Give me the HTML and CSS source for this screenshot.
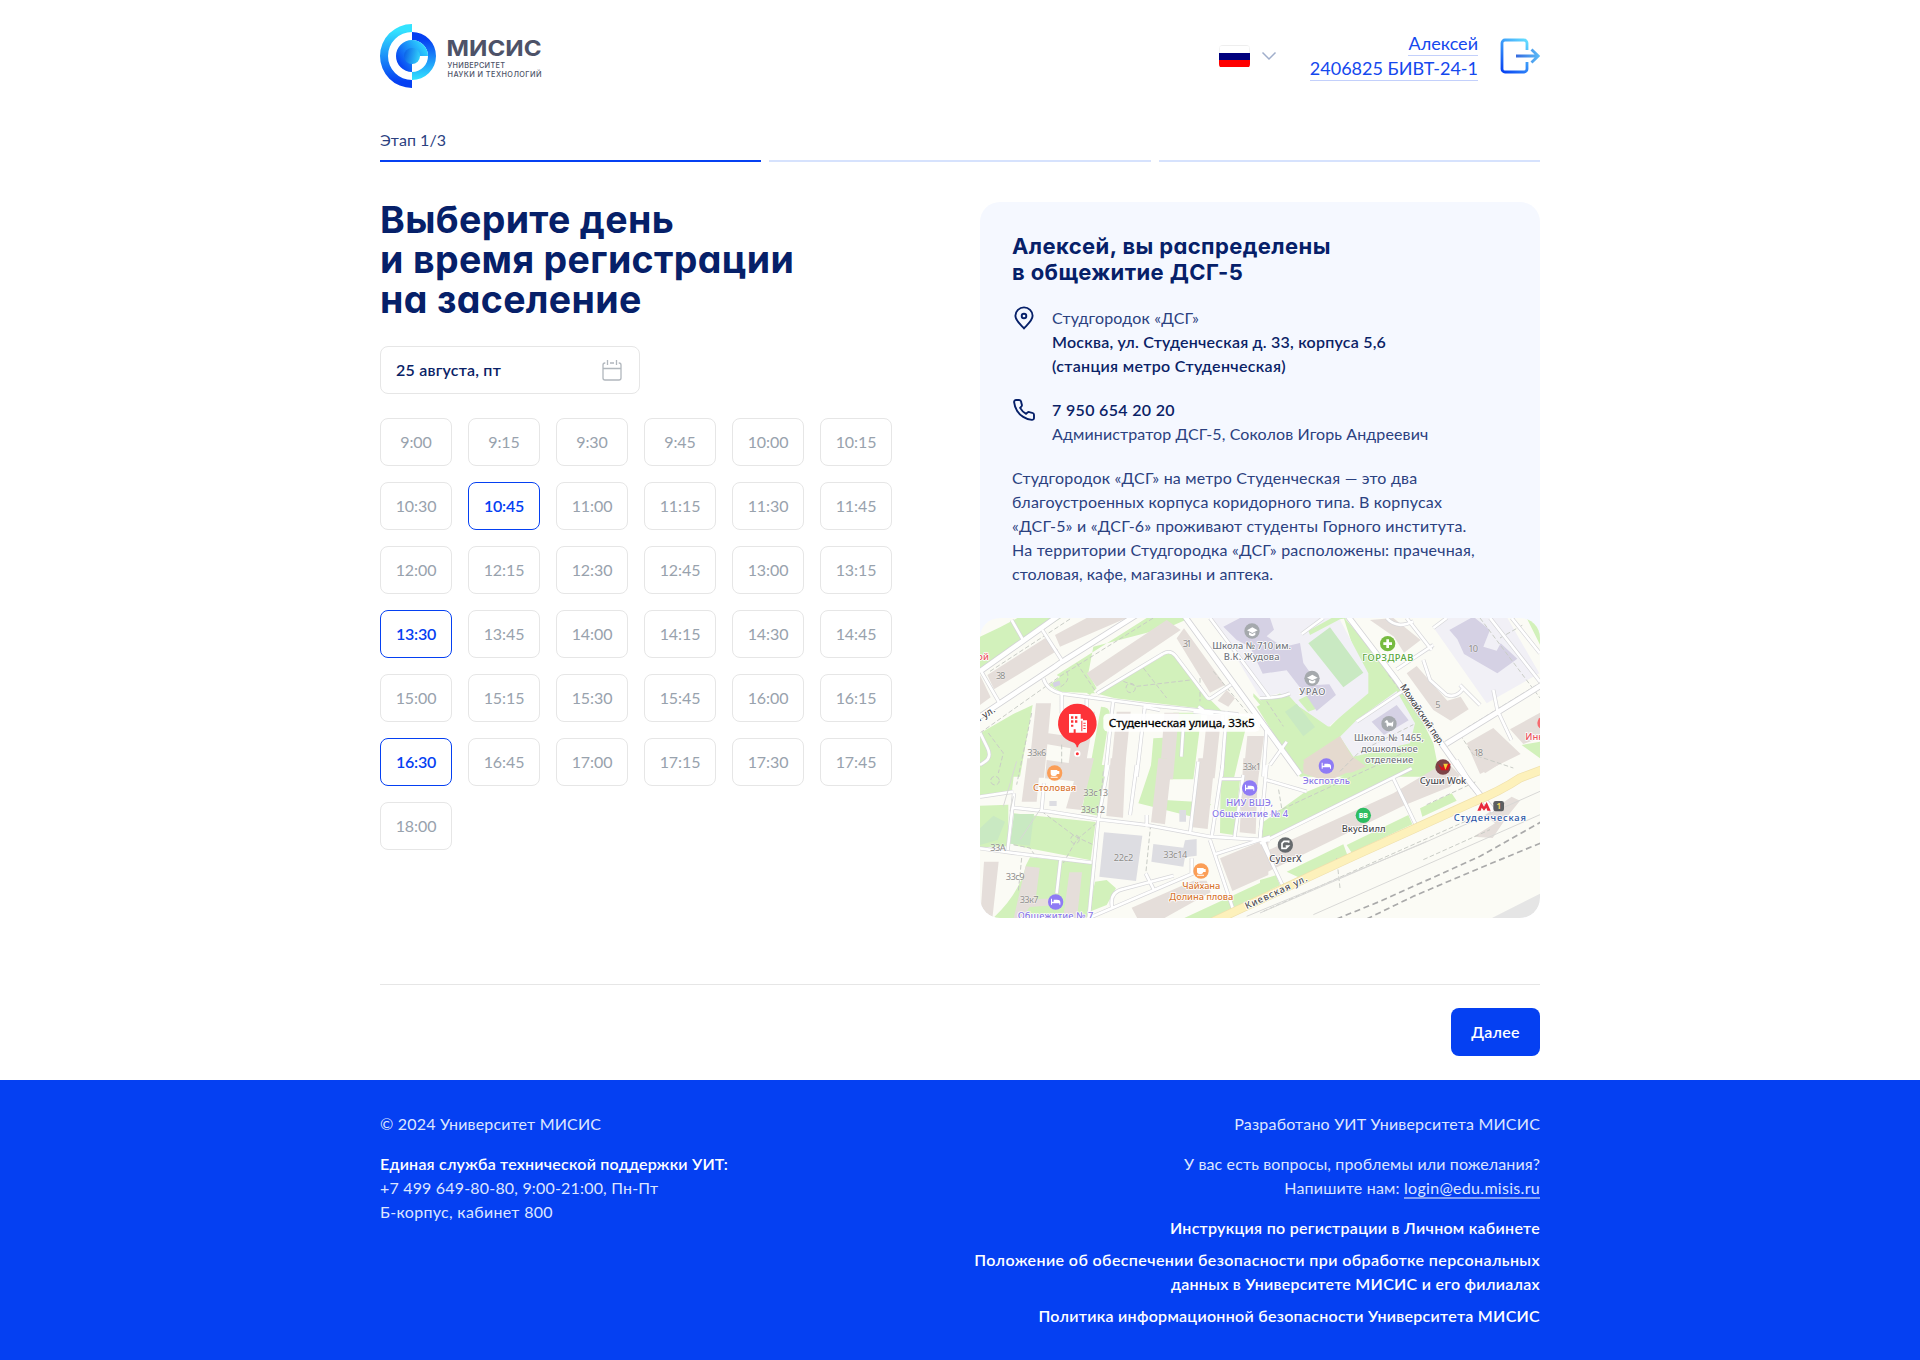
FILE: index.html
```html
<!DOCTYPE html>
<html lang="ru">
<head>
<meta charset="utf-8">
<title>Регистрация на заселение</title>
<link rel="stylesheet" href="styles.css">
</head>
<body>
<div class="container">
  <header class="header">
    <svg class="logo" width="164" height="64" viewBox="0 0 164 64">
      <defs>
        <linearGradient id="lgDown" x1="0" y1="0" x2="0" y2="1"><stop offset="0.1" stop-color="#33e3ff"/><stop offset="0.9" stop-color="#0540f2"/></linearGradient>
        <linearGradient id="lgUp" x1="0" y1="0" x2="0" y2="1"><stop offset="0.15" stop-color="#0540f2"/><stop offset="1" stop-color="#33e3ff"/></linearGradient>
        <linearGradient id="lgIn" x1="1" y1="0.2" x2="0.1" y2="0.8"><stop offset="0" stop-color="#33e3ff"/><stop offset="1" stop-color="#0540f2"/></linearGradient>
        <linearGradient id="lgDot" x1="0" y1="0.4" x2="1" y2="0.6"><stop offset="0" stop-color="#0c62e8"/><stop offset="1" stop-color="#33d3fa"/></linearGradient>
      </defs>
      <path fill="url(#lgDown)" d="M32 0a32 32 0 0 0 0 64v-8a24 24 0 0 1 0-48z"/>
      <path fill="url(#lgUp)" d="M32 8a24 24 0 0 1 0 48v-8a16 16 0 0 0 0-32z"/>
      <path fill="url(#lgIn)" d="M48 32a16 16 0 1 0-16 16v-8l8-8z"/>
      <circle cx="32" cy="32" r="8" fill="url(#lgDot)"/>
      <g class="logo-text">
        <text class="logo-name" x="66.5" y="31.5" textLength="95" lengthAdjust="spacingAndGlyphs">МИСИС</text>
        <text class="logo-sub" x="67.5" y="44.3" textLength="57.5">УНИВЕРСИТЕТ</text>
        <text class="logo-sub" x="67.5" y="52.5" textLength="94">НАУКИ И ТЕХНОЛОГИЙ</text>
      </g>
    </svg>
    <div class="header-right">
      <div class="lang">
        <span class="flag"><i class="flag-white"></i><i class="flag-blue"></i><i class="flag-red"></i></span>
        <svg width="16" height="10" viewBox="0 0 16 10"><path d="M1.5 1.5 8 8l6.5-6.5" fill="none" stroke="#a0aecb" stroke-width="1.5"/></svg>
      </div>
      <div class="user"><span class="user-line">Алексей</span><span class="user-line">2406825 БИВТ-24-1</span></div>
      <svg class="logout" width="40" height="36" viewBox="0 0 40 36">
        <defs><linearGradient id="lgOut" gradientUnits="userSpaceOnUse" x1="2" y1="34" x2="28" y2="4"><stop offset="0" stop-color="#0540f2"/><stop offset="1" stop-color="#63dcff"/></linearGradient>
        <linearGradient id="lgArrow" gradientUnits="userSpaceOnUse" x1="16" y1="18" x2="40" y2="18"><stop offset="0" stop-color="#3569df"/><stop offset="1" stop-color="#5bbdf8"/></linearGradient></defs>
        <path d="M27 12V5a3 3 0 0 0-3-3H5a3 3 0 0 0-3 3v26a3 3 0 0 0 3 3h19a3 3 0 0 0 3-3v-7" fill="none" stroke="url(#lgOut)" stroke-width="2.8"/>
        <path d="M16 18h22M31.500 11.500 38.200 18l-6.700 6.500" fill="none" stroke="url(#lgArrow)" stroke-width="2.8"/>
      </svg>
    </div>
  </header>

  <section class="progress">
    <div class="stage">Этап 1/3</div>
    <div class="bars"><i class="bar bar-on"></i><i class="bar"></i><i class="bar"></i></div>
  </section>

  <main class="main">
    <section class="booking">
      <h1 class="title">Выберите день<br>и время регистрации<br>на заселение</h1>
      <div class="date">
        <span>25 августа, пт</span>
        <svg width="20" height="21" viewBox="0 0 20 21" fill="none" stroke="#b1b7bd" stroke-width="1.3"><path d="M3.300 3H3a2 2 0 0 0-2 2v13a2 2 0 0 0 2 2h14a2 2 0 0 0 2-2V5a2 2 0 0 0-2-2h-.3M8 3h4M1 8.500h18M5.500 0v5M14.500 0v5"/></svg>
      </div>
      <div class="slots">
        <span class="slot">9:00</span><span class="slot">9:15</span><span class="slot">9:30</span><span class="slot">9:45</span><span class="slot">10:00</span><span class="slot">10:15</span>
        <span class="slot">10:30</span><span class="slot slot-on">10:45</span><span class="slot">11:00</span><span class="slot">11:15</span><span class="slot">11:30</span><span class="slot">11:45</span>
        <span class="slot">12:00</span><span class="slot">12:15</span><span class="slot">12:30</span><span class="slot">12:45</span><span class="slot">13:00</span><span class="slot">13:15</span>
        <span class="slot slot-on">13:30</span><span class="slot">13:45</span><span class="slot">14:00</span><span class="slot">14:15</span><span class="slot">14:30</span><span class="slot">14:45</span>
        <span class="slot">15:00</span><span class="slot">15:15</span><span class="slot">15:30</span><span class="slot">15:45</span><span class="slot">16:00</span><span class="slot">16:15</span>
        <span class="slot slot-on">16:30</span><span class="slot">16:45</span><span class="slot">17:00</span><span class="slot">17:15</span><span class="slot">17:30</span><span class="slot">17:45</span>
        <span class="slot">18:00</span>
      </div>
    </section>

    <aside class="card">
      <div class="card-body">
        <h2 class="card-title">Алексей, вы распределены<br>в общежитие ДСГ-5</h2>
        <div class="info">
          <svg class="info-icon" width="24" height="24" viewBox="0 0 24 24" fill="none" stroke="#062069" stroke-width="1.9"><path d="M12 22.300C8.500 18.500 3.400 14.500 3.400 9.800a8.600 8.400 0 0 1 17.200 0c0 4.700-5.100 8.700-8.600 12.500z"/><circle cx="12" cy="10" r="2.300"/></svg>
          <div>Студгородок «ДСГ»<br><span class="strong">Москва, ул. Студенческая д. 33, корпуса 5,6</span><br><span class="strong station">(станция метро Студенческая)</span></div>
        </div>
        <div class="info">
          <svg class="info-icon" width="24" height="24" viewBox="0 0 24 24" fill="none" stroke="#062069" stroke-width="1.9" stroke-linejoin="round"><path d="M22 16.900v3a2 2 0 0 1-2.200 2A19.800 19.800 0 0 1 11.200 18.900a19.500 19.500 0 0 1-6-6A19.800 19.800 0 0 1 2.100 4.200 2 2 0 0 1 4.100 2h3a2 2 0 0 1 2 1.700c.1 1 .4 1.900.7 2.800a2 2 0 0 1-.5 2.100L8.100 9.900a16 16 0 0 0 6 6l1.300-1.300a2 2 0 0 1 2.100-.4c.9.300 1.900.6 2.800.7a2 2 0 0 1 1.700 2z"/></svg>
          <div><span class="strong phone">7 950 654 20 20</span><br><span class="admin">Администратор ДСГ-5, Соколов Игорь Андреевич</span></div>
        </div>
        <p class="about">Студгородок «ДСГ» на метро Студенческая — это два<br>благоустроенных корпуса коридорного типа. В корпусах<br>«ДСГ-5» и «ДСГ-6» проживают студенты Горного института.<br>На территории Студгородка «ДСГ» расположены: прачечная,<br><span class="about-last">столовая, кафе, магазины и аптека.</span></p>
      </div>
      <svg class="map" width="560" height="300" viewBox="0 0 1680 900">
        <defs>
          <g id="roads">
            <g transform="translate(0 -24)">
              <path d="M95 30 132 95M187 60 250 158M0 178 62 285M190 205q10 35 55 46l255 34 275 28M352 250 548 132q22-14 38 5l95 125q6 8 16 0l56-38M320 268v40M400 268 375 500M495 285 470 500M245 250v60M640 305 700 312M540 300 490 290M655 290 670 300M610 345 604 440"/>
              <path d="M690 24 870 265M740 305 725 500M860 350 850 500M0 368l22 45q15 30-10 44l-12 8"/>
            </g>
            <g transform="translate(840 -24)">
              <path d="M90 250q-30 14-90 14M125 72 190 24M290 335 425 245M410 178 520 105M440 24 515 120M490 150l20 60 50 45q30 10 50-20M600 225 660 285M700 240l12 60 42 90M560 24l-40 30M690 24 840 215M755 24 840 130M380 24q30 35 80 10"/>
            </g>
            <g transform="translate(0 441)">
              <path d="M0 95 100 80M102 85 83 255M100 128 210 140 355 163 500 180 690 215 870 226M0 250l100 14 235 29M385 0 355 163 325 470M192 55 185 135M500 150v35M655-10 630 205M728 0 695 215M790 30 763 220M690 225 765 450M242 280 230 385M320 462 640 325M396 425q-8-45 35-53l150-40M522 375 497 325M635 280v50M850 225l18 45M470 0 450 150M705 268 870 215M720 42h70M840 225l5-60"/>
            </g>
            <g transform="translate(840 441)">
              <path d="M400 40 470 185M5 230 72 370M20 0 0 220M0 235 455 10M590-15 665 105M30 0 80-70M20 45l120 35"/>
            </g>
          </g>
          <g id="avenues">
            <path d="M-10 302 225 146q15-12 30-20L480-16M615-4 960 470M0 160 240-10"/>
            <path d="M1100-10 1245 180 1440 456 1540 580M1398 378 1700 192"/>
          </g>
          <path id="kiev" d="M690 915 1000 770 1130 710 1290 638 1480 552Q1560 520 1620 480L1700 450"/>
        </defs>
        <rect class="ground" width="1680" height="900"/>

        <g transform="translate(0 -24)">
          <path class="green" d="M0 80 60 52 120 20h130L0 175zM230 195 500 24h130L570 50 340 110 325 190 350 235 330 255zM208 225 280 170 345 250 240 245zM355 252 565 128q10-5 20 5l100 130 40 40-320-38zM0 370 100 312 158 285 120 500H0zM363 290q28 0 26 25L360 500h-35zM520 385l30-2v120h-40zM580 308h85l-25 200h-70zM745 312l60 10-45 190h-35zM820 250l50 50v20l-50-60z"/>
          <path class="build" d="M225 75 320 24h120L240 110zM22 195 195 85 235 120 42 238zM0 195 32 262 0 285zM320 190 560 30l42 30L350 230zM590 85 612 55 735 225 690 248zM740 240l25 25-20 25-32-18zM168 280h45l-8 90 75 10 20-20 10-55h35l-35 200h-50l12-90-70-12-10 100h-48zM410 305h42l-20 200h-42zM553 308h44l-18 200h-40zM682 315h42l-20 190h-42zM802 378h50l-20 150h-45z"/>
          <path class="school-b" d="M218 218l20-6 4 12-20 8z"/>
        </g>
        <g transform="translate(840 -24)">
          <path class="green" d="M250 20 405 200 470 300 520 400 540 500H120L-10 290 60 250 210 350 320 240z"/>
          <path class="school" d="M-145 20H235L325 190v60L205 350 60 250 0 262zM410 243 290 330l-50 50 40 60 170-40 15-60zM520 52 560 20h180l98 170-158 90z"/>
          <path class="green" d="M145 62 215 24h50L240 28 150 75zM0 270 85 255l45 50-5 40-50 20zM800 24h40v80zM785 405l55-10v50zM115 270l40-20 30 40-40 15z"/>
          <path class="field" d="M145 100 210 52 310 188 250 232zM75 305l35-24 55 70-35 28z"/>
          <path class="school-b" d="M-110 50-60 24h90l12 35-22 20 50 32 50-12 10 60 28 40 10 26 40-2 20 32-58 48-28-42-62-80-72 10L-30 110-70 90zM335 335l75-50 36 46-74 44zM568 60 640 20l50 40-20 50 40 12 12-22 50 46-60 44-100-58-20-44z"/>
          <path class="build" d="M330 30 400 24l82 66-50 38-30-48zM440 190l30-22 92 104 40-12 24 38-54 34-52-32zM620 400l80-46 82 78-122 60zM750 358l90-50v76l-50 18z"/>
          <path class="tan" d="M130 450 240 378l35 60 70 50H140z"/>
        </g>
        <g transform="translate(0 441)">
          <path class="green" d="M0 0h105L95 85 0 90zM0 122l85-3v125l-85 3zM102 145l50 6 195 20-15 115-230-45zM150 277l188 18-18 175H28q90-80 110-170zM330 0h50l-25 152-50-10zM475 115 520-20h40l-6 125 90 5 50 8-45 40zM345 350l35-5 28 25-28 50-55 22zM722 45h58l-18 165-42-6zM835 190l35-30v50zM600 465 870 340v50L720 470z"/>
          <path class="field" d="M0 190l40-38 35 18-22 55-53 15zM102 147h60l-12 95-60-6z"/>
          <path class="build" d="M142-20h40l-12 130h-45zM200-15l110 15-10 50-105-10zM302-20h40l-38 155-46-5zM392-20h45l-8 178-50-5zM535-20h42l-22 198-42-6zM655-20h50l-22 212-45-5zM790-20h45l-8 227-48-5zM12 290h44L36 470H0zM137 304l42 4-12 94 64-2-2 20-80 6-30 42h-20zM268 322h38l-16 148h-42zM455 428 640 347h40l12 35-140 78h-80zM720 280 865 220v110l-108 48z"/>
          <path class="grey-b" d="M372 202 487 212 468 348 358 335zM520 237l90 11 5-22 35-4v50l-35 5-5 28-96-15zM208 108h22v15h-22zM598 135h20v35h-20z"/>
        </g>
        <g transform="translate(840 441)">
          <path class="tan" d="M130-5 240-10l60 15-100 45-70-25z"/>
          <path class="green" d="M0 178 130 85 225 45 350-10h115v12L30 216 0 220zM0 345l48-14 12 30-60 28zM80 320l170-82 12 32-135 72zM260 240l185-90 12 28-182 85zM480 130l95-45 15 22-103 48z"/>
          <path class="build" d="M-40 285 400 85 450 55 560-10 600 30 570 65 435 120 40 312-40 350zM650-10h80l-55 35zM640 215l65-40-30-25 80-55 25 12-40 50-42 62z"/>
        </g>

        <g class="path-dash">
          <path d="M0 345 240 175 520 0M30 160 290-10M290 135l60 90M430 190l40 15 170-20M490 150l70 90M260 160q15 30-25 50M25 345l45 60-15 60M155 285 110 500M245 380v60M185 580l100 75 65 30M350 615l-60 50-40 70M100 680l50 10 20 30M125 720l-10 100M512 620l-15 150M370 460 330 900M660 180v70M700 160 840 330"/>
          <path d="M860 250 910 325M1130 20 1480 520M1225 170l60 80M1460 330 1680 195M1440 350l40 60 120 40M1560 60l70-40M1080 460 1140 400 1300 320M850 600l430-200M905 570l-10-60M1080 810l-10-90M1500 0l180 240M1600 0l80 100M850 880l640-285M1330 725l200-90M1340 560l150-70"/>
          <circle cx="452" cy="210" r="14"/><circle cx="285" cy="664" r="13"/><circle cx="45" cy="488" r="13"/>
        </g>
        <use class="casing" href="#roads"/><use class="casing-wide" href="#avenues"/>
        <use class="road" href="#roads"/><use class="road-wide" href="#avenues"/>
        <use class="kiev-casing" href="#kiev"/><use class="kiev-road" href="#kiev"/>
        <g class="rail-thin"><path d="M800 895 1320 680 1680 520M840 885l500-215M1000 890 1680 590M70 565 110 430M180 575l-60 90M100 535l-10 45"/></g>
        <g class="rail"><path d="M1070 903 1200 850 1500 715 1690 608M1160 903 1300 835 1500 750 1690 672"/></g>
        <path class="corner" d="M1530 903 1690 822v81z"/>

        <g class="num">
          <text x="48" y="182" textLength="28">38</text><text x="608" y="86" textLength="27">31</text>
          <text x="142" y="414" textLength="57">33к6</text><text x="310" y="533" textLength="74">33с13</text>
          <text x="302" y="585" textLength="73">33с12</text><text x="31" y="698" textLength="46">33А</text>
          <text x="401" y="728" textLength="59">22с2</text><text x="550" y="721" textLength="72">33с14</text>
          <text x="77" y="785" textLength="57">33с9</text><text x="119" y="856" textLength="57">33к7</text>
          <text x="788" y="456" textLength="55">33к1</text><text x="1465" y="102" textLength="29">10</text>
          <text x="1366" y="270" textLength="14">5</text><text x="1481" y="413" textLength="28">18</text>
        </g>
        <g class="lbl">
          <text x="697" y="93" textLength="236">Школа № 710 им.</text><text x="731" y="126" textLength="168">В.К. Жудова</text>
          <text x="958" y="231" textLength="78">УРАО</text>
          <text x="1122" y="369" textLength="210">Школа № 1465,</text><text x="1143" y="402" textLength="170">дошкольное</text><text x="1155" y="435" textLength="145">отделение</text>
        </g>
        <g class="lbl dark">
          <text x="1085" y="642" textLength="132">ВкусВилл</text><text x="868" y="733" textLength="97">CyberX</text><text x="1319" y="498" textLength="140">Суши Wok</text>
          <text transform="translate(1259 206) rotate(56)" textLength="215">Можайский пер.</text>
          <text transform="translate(800 874) rotate(-25)" textLength="203">Киевская ул.</text>
          <text transform="translate(-8 316) rotate(-33)" textLength="66">я ул.</text>
        </g>
        <g class="lbl orange"><text x="159" y="518" textLength="130">Столовая</text><text x="607" y="812" textLength="114">Чайхана</text><text x="568" y="845" textLength="192">Долина плова</text></g>
        <g class="lbl violet"><text x="968" y="497" textLength="142">Экспотель</text><text x="739" y="563" textLength="140">НИУ ВШЭ,</text><text x="696" y="596" textLength="228">Общежитие № 4</text><text x="113" y="904" textLength="227">Общежитие № 7</text></g>
        <text class="lbl lime" x="1147" y="129" textLength="153">ГОРЗДРАВ</text>
        <text class="lbl red" x="-8" y="127">ой</text><text class="lbl red" x="1636" y="367">Инн</text>
        <text class="lbl metro" x="1421" y="610" textLength="217">Студенческая</text>

        <circle cx="816" cy="39" r="23" fill="#a5a9ad"/><path class="w" d="M801 37l16-9 16 9-16 8zM807 43v8q10 7 19 0v-8l-9 5z"/>
        <circle cx="996" cy="181" r="23" fill="#a5a9ad"/><path class="w" d="M981 179l16-9 16 9-16 8zM987 185v8q10 7 19 0v-8l-9 5z"/>
        <circle cx="1227" cy="317" r="23" fill="#a5a9ad"/><path class="w" d="M1213 313l8-8 5 9h9l5-5-1 15-4 4v-5h-11v5l-4-4-1-10z"/>
        <circle cx="1223" cy="77" r="23" fill="#77bb41"/><path class="w" d="M1219 64h8v9h9v8h-9v9h-8v-9h-9v-8h9z"/>
        <g id="cup"><circle cx="224" cy="465" r="23" fill="#fb9e57"/><path class="w" d="M212 456h20v3h6v9h-7q-2 6-6 6h-6q-7 0-7-8zM212 476h21v3h-21z"/></g>
        <use href="#cup" x="439" y="294"/>
        <g id="bed"><circle cx="809" cy="510" r="23" fill="#8f7bf5"/><path class="w" d="M795 500h3v9h5v-6h10q9 0 10 7v8h-3v-4h-22v4h-3z"/></g>
        <use href="#bed" x="230" y="-66"/><use href="#bed" x="-582" y="342"/>
        <circle cx="1150" cy="592" r="23" fill="#2dbd62"/><text class="bb" x="1150" y="600" text-anchor="middle">BB</text>
        <circle cx="916" cy="681" r="23" fill="#666a6d"/><path d="M926 674v-4h-14l-6 6v15h12l7-7h-8" fill="none" stroke="#fff" stroke-width="5"/>
        <circle cx="1389" cy="447" r="23" fill="#7c4347"/><path d="M1374 437l10 20h20l8-20-10 2-6 12-4-14-5 12z" fill="#d4131b"/><path d="M1390 437l6 18 8-18z" fill="#f3cd3b"/>
        <circle cx="1692" cy="315" r="20" fill="#f66b70"/>
        <path d="M1492 578l12-26 8 14 8-14 12 26h-10l-3-9-7 9-7-9-3 9z" fill="#e8283b"/>
        <rect x="1540" y="549" width="32" height="31" rx="7" fill="#5b5d60"/><text class="exit" x="1556" y="573" text-anchor="middle">1</text>

        <rect class="pin-label" x="370" y="287" width="470" height="54" rx="14"/>
        <text class="pin-text" x="386" y="326" textLength="438" lengthAdjust="spacingAndGlyphs">Студенческая улица, 33к5</text>
        <path d="M292 257a59 59 0 0 1 14 116q-11 4-12 15h-4q-1-11-12-15A59 59 0 0 1 292 257z" fill="#fd3338"/>
        <path fill="#fff" fill-rule="evenodd" d="M267 288h35v14h7v5h12v37h-54zM273 295v7h7v-7zm12 0v7h7v-7zM273 307v7h7v-7zm12 0v7h7v-7zM273 320v6h7v-6zM281 334v10h6v-10zM304 308v32h3v-32zM310 314v3h7v-3zm0 8v3h7v-3zm0 8v3h7v-3z"/>
        <circle cx="292" cy="407" r="7" fill="#fd3338" stroke="#fff" stroke-width="5"/>
      </svg>
    </aside>
  </main>

  <div class="actions"><button class="next">Далее</button></div>
</div>

<footer class="footer">
  <div class="footer-inner">
    <div class="foot-col">
      <div>© 2024 Университет МИСИС</div>
      <div><b class="support">Единая служба технической поддержки УИТ:</b><br>+7 499 649-80-80, 9:00-21:00, Пн-Пт<br><span class="room">Б-корпус, кабинет 800</span></div>
    </div>
    <div class="foot-col foot-right">
      <div>Разработано УИТ Университета МИСИС</div>
      <div><span class="ask">У вас есть вопросы, проблемы или пожелания?</span><br>Напишите нам: <span class="mail">login@edu.misis.ru</span></div>
      <div class="docs">
        <b>Инструкция по регистрации в Личном кабинете</b>
        <b><span class="policy">Положение об обеспечении безопасности при обработке персональных</span><br>данных в Университете МИСИС и его филиалах</b>
        <b>Политика информационной безопасности Университета МИСИС</b>
      </div>
    </div>
  </div>
</footer>
</body>
</html>
```
FILE: styles.css
```css
* { box-sizing: border-box; }
body { margin: 0; background: #fff; font: 400 16px/24px Lato, "Open Sans", sans-serif; letter-spacing: .18px; color: #2b417f; }
.container { width: 1160px; margin: 0 auto; }

.header { display: flex; justify-content: space-between; align-items: center; height: 112px; }
.logo { display: block; overflow: visible; }
.logo-text { fill: #4d5268; font-family: Inter, sans-serif; letter-spacing: 0; }
.logo-name { font-size: 22px; font-weight: 700; }
.logo-sub { font-size: 7.3px; font-weight: 500; }
.header-right { display: flex; align-items: center; }
.lang { display: flex; align-items: center; gap: 11px; margin-right: 33px; }
.flag { display: flex; flex-direction: column; width: 31px; height: 23px; border: 1px solid #eee; border-width: 1px 0 0; border-radius: 4px; overflow: hidden; }
.flag i { flex: 1; }
.flag-white { background: #fff; border: 1px solid #f2f2f2; border-width: 0 1px; }
.flag-blue { background: #00007d; }
.flag-red { background: #f00; }
.user { display: flex; flex-direction: column; align-items: flex-end; gap: 1px; margin-right: 22px; color: #1448ee; font-size: 18px; line-height: 23px; letter-spacing: 0; }
.user-line { border-bottom: 1px solid #c3d0fb; height: 24px; }
.logout { display: block; }

.progress { padding-top: 16px; }
.stage { height: 24px; line-height: 23px; letter-spacing: .04px; }
.bars { display: grid; grid-template-columns: repeat(3, 1fr); gap: 8px; margin-top: 8px; }
.bar { height: 2px; background: #d6e2fd; }
.bar-on { background: #0540f2; }

.main { display: flex; justify-content: space-between; align-items: flex-start; margin-top: 40px; }
.booking { width: 520px; }
.title { margin: -2px 0 0; font: 700 37.5px/40px Inter, sans-serif; font-feature-settings: "cv11"; letter-spacing: .35px; color: #062069; }
.date { display: flex; justify-content: space-between; align-items: center; width: 260px; height: 48px; margin-top: 26px; padding: 0 17px 0 15px; border: 1px solid #e6e6e6; border-radius: 8px; color: #0a2266; font-weight: 600; letter-spacing: .21px; }
.slots { display: grid; grid-template-columns: repeat(6, 72px); gap: 16px; margin-top: 24px; }
.slot { display: flex; align-items: center; justify-content: center; height: 48px; border: 1px solid #e6e6e6; border-radius: 8px; color: #98a2ad; letter-spacing: -.1px; }
.slot-on { border-color: #0540f2; color: #0540f2; font-weight: 600; letter-spacing: -.2px; }

.card { width: 560px; background: #f5f8ff; border-radius: 20px; overflow: hidden; }
.card-body { padding: 31px 32px 32px; }
.card-title { margin: 0 0 21px; font: 700 22px/26px Inter, sans-serif; font-feature-settings: "cv11"; letter-spacing: .4px; color: #062069; }
.info { display: flex; gap: 16px; margin-bottom: 20px; }
.info-icon { flex: none; }
.strong { color: #0a2266; font-weight: 600; letter-spacing: .22px; }
.station, .phone { letter-spacing: .33px; }
.admin { letter-spacing: .12px; }
.about { margin: 0; letter-spacing: .2px; white-space: nowrap; }
.about-last { letter-spacing: .06px; }
.map { display: block; border-radius: 20px; }

.ground { fill: #fbfbf5; }
.green { fill: #d2f1bb; }
.field { fill: #c9e9c2; }
.build { fill: #e5deda; }
.grey-b { fill: #dddde2; }
.school { fill: #f1f0f6; }
.school-b { fill: #d5d1e4; }
.tan { fill: #e5dacf; }
.casing, .road, .casing-wide, .road-wide, .kiev-casing, .kiev-road, .path-dash, .rail, .rail-thin { fill: none; }
.casing { stroke: #d6d6d9; stroke-width: 12px; }
.road { stroke: #fff; stroke-width: 8px; }
.casing-wide { stroke: #d3d3d6; stroke-width: 19px; }
.road-wide { stroke: #fff; stroke-width: 14px; }
.kiev-casing { stroke: #efe0ad; stroke-width: 27px; }
.kiev-road { stroke: #fdf1bb; stroke-width: 23px; }
.path-dash { stroke: #c9ccc6; stroke-width: 3px; stroke-dasharray: 14 7; }
.rail-thin { stroke: #d8d8d6; stroke-width: 3px; }
.rail { stroke: #aaa; stroke-width: 5px; stroke-dasharray: 18 11; }
.corner { fill: #e5e5e5; }
.map text { font-family: "Noto Sans", sans-serif; font-size: 28px; letter-spacing: 0; }
.num { fill: #8e8d8b; stroke: #fff; stroke-width: 3px; paint-order: stroke; stroke-opacity: .5; }
.lbl { fill: #74777e; stroke: #fff; stroke-width: 5px; stroke-linejoin: round; paint-order: stroke; font-weight: 500; }
.dark { fill: #4c4c50; }
.orange { fill: #d87731; }
.violet { fill: #8a78e6; }
.lime { fill: #58a63b; }
.red { fill: #ec5560; }
.metro { fill: #2c57a5; }
.w { fill: #fff; }
.map .bb { font-size: 21px; font-weight: 800; fill: #fff; }
.map .exit { font-size: 24px; font-weight: 700; fill: #f3da62; }
.pin-label { fill: #fff; fill-opacity: .9; }
.map .pin-text { font-size: 31px; font-weight: 400; fill: #000; stroke: #000; stroke-width: .8px; }

.actions { display: flex; justify-content: flex-end; margin-top: 66px; padding: 23px 0 24px; border-top: 1px solid #e6e6e6; }
.next { height: 48px; width: 89px; border: 0; border-radius: 8px; background: #0540f2; color: #fff; font: 600 16px/24px Lato, sans-serif; letter-spacing: .26px; }

.footer { background: #0540f2; color: #dde6ff; }
.footer-inner { display: flex; justify-content: space-between; width: 1160px; height: 280px; margin: 0 auto; padding-top: 32px; }
.foot-col { display: flex; flex-direction: column; gap: 16px; }
.foot-right { text-align: right; }
.footer b { color: #fff; font-weight: 600; letter-spacing: .27px; }
.footer .support { letter-spacing: .2px; }
.room { letter-spacing: .31px; }
.ask { letter-spacing: .13px; }
.docs { display: flex; flex-direction: column; gap: 8px; }
.policy { letter-spacing: .39px; }
.mail { text-decoration: underline; text-decoration-color: #7f9df8; text-underline-offset: 3px; text-decoration-thickness: 2px; letter-spacing: .3px; }
```
